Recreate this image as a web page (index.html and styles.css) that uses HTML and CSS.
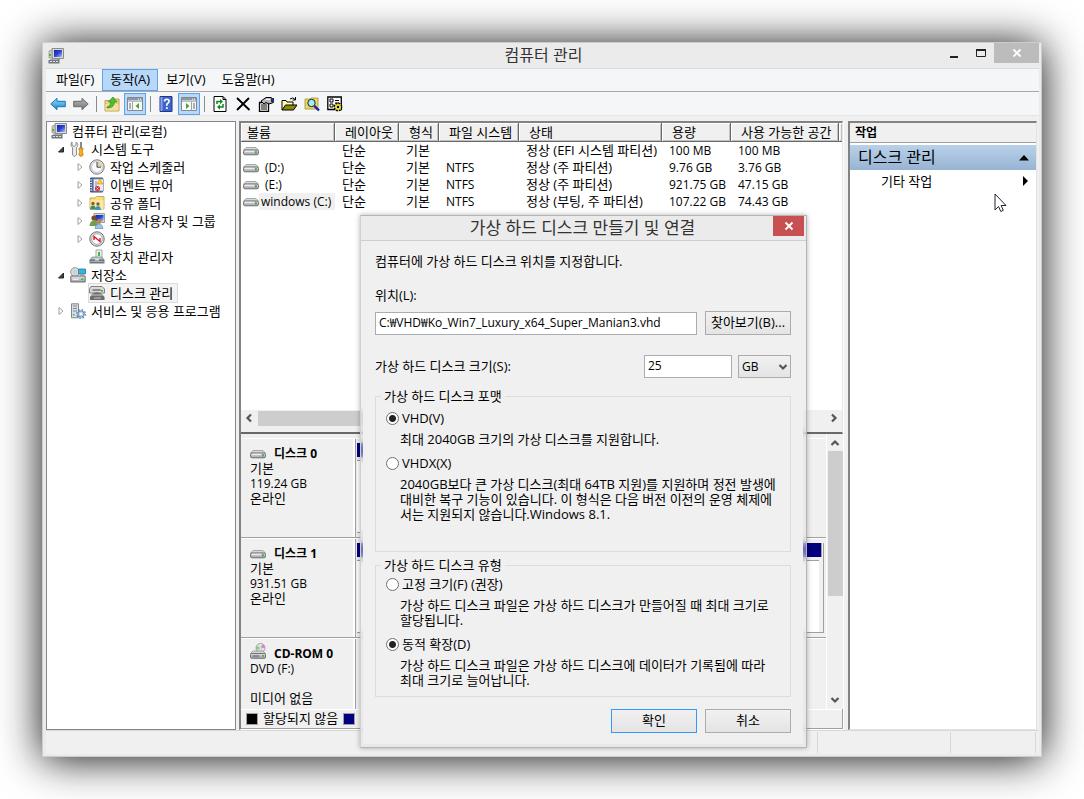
FILE: index.html
```html
<!DOCTYPE html>
<html lang="ko">
<head>
<meta charset="utf-8">
<title>컴퓨터 관리</title>
<link rel="stylesheet" href="styles.css">
</head>
<body>
<svg class="sprite" aria-hidden="true">
  <defs>
    <linearGradient id="g-blue" x1="0" y1="0" x2="1" y2="1"><stop offset="0" stop-color="#0a1fb4"/><stop offset=".5" stop-color="#2746d8"/><stop offset="1" stop-color="#a9c4f5"/></linearGradient>
    <linearGradient id="g-arrow" x1="0" y1="0" x2="0" y2="1"><stop offset="0" stop-color="#8fe0fb"/><stop offset="1" stop-color="#1587cf"/></linearGradient>
    <linearGradient id="g-gray" x1="0" y1="0" x2="0" y2="1"><stop offset="0" stop-color="#b5b5b5"/><stop offset="1" stop-color="#777"/></linearGradient>
    <linearGradient id="g-drive" x1="0" y1="0" x2="0" y2="1"><stop offset="0" stop-color="#e2e2e6"/><stop offset="1" stop-color="#a2a2aa"/></linearGradient>
  </defs>
  <symbol id="i-computer" viewBox="0 0 16 16">
    <path d="M4 .5h11.500v10H4z" fill="#dcd9cf" stroke="#8d8b84"/><path d="M6 2h8v7H6z" fill="url(#g-blue)"/>
    <path d="M1 3l3-1v8H1z" fill="#c9c9c2" stroke="#85857d" stroke-width=".6"/><path d="M1 6h2v2H1z" fill="#5fae3a"/>
    <path d="M8 10.500h4V12H8z" fill="#9b998f"/><path d="M.5 12h11v3.500H.5z" fill="#6f777d"/><path d="M2 11h7v1H2z" fill="#aab1b5"/><path d="M2 13h2v1H2zM5 13h2v1H5zM8 13h2v1H8z" fill="#dfe6ea"/>
  </symbol>
  <symbol id="i-tools" viewBox="0 0 16 16">
    <path d="M2 1v3l2 1.500L6 4V1c2 1 2.500 4 .5 5.500V14q-2.500 3-4 0V6.500C.5 5 .5 2 2 1z" fill="#e9e9e9" stroke="#777" stroke-width=".8"/>
    <path d="M10 1h2v7h-2z" fill="#8a8a8a"/><path d="M9 7h4v2l-.7 1 1 4q-2.300 3-4.600 0l1-4L9 9z" fill="#f4ad1c" stroke="#b06f07" stroke-width=".6"/>
  </symbol>
  <symbol id="i-clock" viewBox="0 0 16 16">
    <circle cx="8" cy="8" r="7.200" fill="#dfe5ea" stroke="#7b7b7b"/><circle cx="8" cy="8" r="5.400" fill="#f9fbfd" stroke="#b4bac0" stroke-width=".7"/>
    <path d="M8 8V2.800A5.200 5.200 0 0 1 13.200 8z" fill="#f3cf8c"/><path d="M8 3v5.200h4" fill="none" stroke="#2b4a77"/>
  </symbol>
  <symbol id="i-event" viewBox="0 0 16 16">
    <path d="M1.500 1h12v14h-12z" fill="#5570a8" stroke="#374c7d"/><path d="M4.500 2h10v12h-10z" fill="#e9ecf4" stroke="#8990a5" stroke-width=".7"/><path d="M6 5h2M6 7h2M6 9h2M6 11h2" stroke="#7f8fb6"/>
    <path d="M1 3h2M1 5.500h2M1 8h2M1 10.500h2M1 13h2" stroke="#dfe4f0"/><path d="M11 2l3 5H8z" fill="#ffcf21" stroke="#c29300" stroke-width=".5"/><circle cx="8.500" cy="11.500" r="2.500" fill="#d8222a"/><path d="M7.500 10.500l2 2m0-2l-2 2" stroke="#fff" stroke-width=".8"/>
  </symbol>
  <symbol id="i-share" viewBox="0 0 16 16">
    <path d="M1 3h5l1.500-1.500H15V14H1z" fill="#f7dc82" stroke="#c59a35" stroke-width=".8"/><path d="M1.500 5h13v9h-13z" fill="#fbe8a4"/>
    <circle cx="4" cy="8.500" r="1.700" fill="#8a5b34"/><path d="M1 14.500q.5-4 3-4t3 4z" fill="#3b8f5a"/><circle cx="9" cy="9" r="1.700" fill="#8a5b34"/><path d="M6 15q.5-4 3-4t3 4z" fill="#3c98b8"/>
  </symbol>
  <symbol id="i-users" viewBox="0 0 16 16">
    <path d="M5 .5h10.500v9H5z" fill="#d9d7ce" stroke="#8d8b84" stroke-width=".8"/><path d="M6.500 2h8v6h-8z" fill="url(#g-blue)"/>
    <circle cx="5" cy="5" r="2.600" fill="#7a4b27"/><path d="M.5 13q.5-5.500 4.500-5.500T9 13z" fill="#6fa04d"/>
    <circle cx="10" cy="8.500" r="2.400" fill="#b98551"/><path d="M6 15.500q.5-4.500 4-4.500t4 4.500z" fill="#9fc3e8" stroke="#5682b0" stroke-width=".6"/>
  </symbol>
  <symbol id="i-perf" viewBox="0 0 16 16">
    <circle cx="8" cy="8" r="7.200" fill="#e4e4e4" stroke="#707070"/><circle cx="8" cy="8" r="5.300" fill="#fff" stroke="#8b8b8b" stroke-width=".7"/>
    <path d="M5 9V5.500l6 5V7" fill="none" stroke="#d3202a" stroke-width="1.400"/>
  </symbol>
  <symbol id="i-device" viewBox="0 0 16 16">
    <path d="M7 1h6v8H7z" fill="#f0f2f2" stroke="#8b9494" stroke-width=".8"/><path d="M9 3h2v4H9z" fill="#51ad46"/>
    <path d="M3 8h10l2 3H1z" fill="#bcc4c6" stroke="#6d7678" stroke-width=".6"/><path d="M.5 10.500h15v4H.5z" fill="#6e7a80"/><path d="M6 9.500h4v2H6z" fill="#dbe0e2"/><path d="M1.500 12.500h13" stroke="#a5afb3"/>
  </symbol>
  <symbol id="i-storage" viewBox="0 0 16 16">
    <circle cx="5" cy="5" r="4.400" fill="#d8dcde" stroke="#82898c" stroke-width=".8"/><circle cx="5" cy="5" r="1.300" fill="#fff" stroke="#999" stroke-width=".6"/>
    <path d="M8.500 2h7v5h-7z" fill="#35b3dd" stroke="#277b9a" stroke-width=".8"/><path d="M10 8h4" stroke="#888"/>
    <path d="M.8 9h14.400v6H.8z" fill="url(#g-drive)" stroke="#60666a" stroke-width=".9"/><path d="M11 11.500h2.500V13H11z" fill="#2fcb31"/><path d="M2.500 12.200h6" stroke="#fff"/>
  </symbol>
  <symbol id="i-diskmgmt" viewBox="0 0 16 16">
    <path d="M2 1.500h11l2.500 2.500v4H.5V4z" fill="#d9d9d9" stroke="#6b6b6b" stroke-width=".8"/><path d="M4 4h7l2 2H3z" fill="#8c8c8c"/><path d="M12 5h2v1.500h-2z" fill="#40b83b"/>
    <path d="M3 9q4.500-3.500 10 0l2.500 3v3H1v-3z" fill="#6c6c6c"/><path d="M2 10h12M5 13h7" stroke="#c9c9c9"/>
  </symbol>
  <symbol id="i-services" viewBox="0 0 16 16">
    <path d="M1.500.8h7v14h-7z" fill="#d7dde0" stroke="#737d82" stroke-width=".9"/><path d="M3 3h4M3 5.500h4M3 8h4" stroke="#7f8a90"/><path d="M3 11h1.500v1.500H3z" fill="#43b13d"/>
    <circle cx="11" cy="11" r="3.200" fill="#b9d0e6" stroke="#5f87ad"/><circle cx="11" cy="11" r="4.300" fill="none" stroke="#5f87ad" stroke-width="1.300" stroke-dasharray="1.700 1.680"/><circle cx="11" cy="11" r="1.200" fill="#fff"/>
  </symbol>
  <symbol id="i-drive" viewBox="0 0 16 16">
    <path d="M3 4.500h10l2.500 2.700H.5z" fill="#d8d8dc" stroke="#8c8c8c" stroke-width=".7"/><rect x=".5" y="7" width="15" height="4.800" rx="1.600" fill="url(#g-drive)" stroke="#66666e" stroke-width=".9"/><path d="M2 8.300h9" stroke="#f4f4f6"/><path d="M12 8.200h1.800v2.300H12z" fill="#33b52a"/>
  </symbol>
  <symbol id="i-cd" viewBox="0 0 16 16">
    <circle cx="10.500" cy="5" r="4.500" fill="#e3e3e8" stroke="#888" stroke-width=".7"/><path d="M10.500 5L13 1.200A4.500 4.500 0 0 1 15 4.500z" fill="#d277e2"/><path d="M10.500 5L6.500 7A4.500 4.500 0 0 1 6.500 3z" fill="#76d277"/><circle cx="10.500" cy="5" r="1.200" fill="#fff" stroke="#999" stroke-width=".5"/>
    <path d="M3 8h10l2.500 2.500H.5z" fill="#d6d6da" stroke="#777" stroke-width=".6"/><rect x=".5" y="10.500" width="15" height="4.800" rx="1.200" fill="url(#g-drive)" stroke="#66666e" stroke-width=".9"/><path d="M2.500 13h7" stroke="#555"/><path d="M12 12h1.800v1.800H12z" fill="#33b52a"/>
  </symbol>
  <symbol id="i-back" viewBox="0 0 16 16"><path d="M.8 8L7 2.300v3h8.300v5.400H7v3z" fill="url(#g-arrow)" stroke="#1b72ae"/></symbol>
  <symbol id="i-fwd" viewBox="0 0 16 16"><path d="M15.200 8L9 2.300v3H.7v5.400H9v3z" fill="url(#g-gray)" stroke="#6a6a6a"/></symbol>
  <symbol id="i-up" viewBox="0 0 16 16">
    <path d="M1 4.500h5L7.500 3H15v12H1z" fill="#ecd08a" stroke="#b08d3c" stroke-width=".8"/><path d="M1.500 8h13v6.500h-13z" fill="#f5df9d"/><path d="M3 11q4-1 4-5H4.500L9 1l4 5h-2.700q0 6-7.300 6z" fill="#4cc22e" stroke="#2a8d17" stroke-width=".7"/>
  </symbol>
  <symbol id="i-panel" viewBox="0 0 16 16">
    <path d="M.5 1.500h15v13H.5z" fill="#f7f7f7" stroke="#7f8790"/><path d="M1 2h14v2.500H1z" fill="#8f979f"/><path d="M11 3.200h1M13 3.200h1" stroke="#fff"/><path d="M1 5.500h14" stroke="#b8bec4"/>
    <path d="M5.500 6v8.500M10.500 6v8.500" stroke="#9aa1a8"/><path d="M2 8h2M2 10h2M2 12h2" stroke="#5d6670"/>
  </symbol>
  <symbol id="i-tree" viewBox="0 0 16 16"><use href="#i-panel"/><path d="M6 6h9v8H6z" fill="#f9f9f9"/><path d="M12 7v6L8.500 10z" fill="#42ad22"/></symbol>
  <symbol id="i-actions" viewBox="0 0 16 16"><use href="#i-panel"/><path d="M1 6h9v8H1z" fill="#f9f9f9"/><path d="M5 7v6L8.500 10z" fill="#42ad22"/><path d="M12 8h2M12 10h2M12 12h2" stroke="#5d6670"/></symbol>
  <symbol id="i-help" viewBox="0 0 16 16"><path d="M2 .5h12v15H2z" fill="#3f63cc" stroke="#1d3686"/><path d="M2.500 1h2v14h-2z" fill="#8aa3e8"/><path d="M6.500 5.500q0-2.300 2.300-2.300t2.300 2q0 1.300-1.300 2T8.800 9.800" fill="none" stroke="#fff" stroke-width="1.600"/><path d="M8 11.200h1.800V13H8z" fill="#fff"/></symbol>
  <symbol id="i-refresh" viewBox="0 0 16 16"><path d="M2 .5h9l3 3v12H2z" fill="#fff" stroke="#000"/><path d="M11 .5v3h3" fill="none" stroke="#000"/><path d="M5 8V5.500h4M11 8v3H7" fill="none" stroke="#07891b" stroke-width="1.500"/><path d="M8 3l3 2.500L8 8zM8 8.500L5 11l3 2.700z" fill="#07891b"/></symbol>
  <symbol id="i-delete" viewBox="0 0 16 16"><path d="M2 2l12.500 12M14 2L2 14" stroke="#000" stroke-width="1.900"/></symbol>
  <symbol id="i-props" viewBox="0 0 16 16"><path d="M1.500 6.500h9v9h-9z" fill="#fff" stroke="#000" stroke-width="1.300"/><path d="M3 9h6M3 11h6M3 13h6" stroke="#000"/><path d="M3 5l5-3.500h5l2.500 2v3L11 8 8 6.500 6 8z" fill="#b8b8b8" stroke="#000"/><path d="M8 3.500h4" stroke="#fff"/><path d="M13 2h3v4h-3z" fill="#2a2a6c"/></symbol>
  <symbol id="i-open" viewBox="0 0 16 16"><path d="M1 14V4.500h4L6 6h6v3" fill="#ffffb0" stroke="#000"/><path d="M1 14l3.500-5H16l-3.500 5z" fill="#8d8a0a" stroke="#000"/><path d="M9 3q3-2.500 5 .5M14.500 1v3h-3" fill="none" stroke="#000"/></symbol>
  <symbol id="i-find" viewBox="0 0 16 16"><path d="M1 3h5l1-1h7v11H1z" fill="#e9d66c" stroke="#a89328" stroke-width=".8"/><circle cx="7.500" cy="7" r="3.700" fill="#9deef7" stroke="#222"/><path d="M10.300 9.800L15 14.500" stroke="#1327ad" stroke-width="2.400"/></symbol>
  <symbol id="i-settings" viewBox="0 0 16 16"><path d="M.8 1h13.500v12.500H.8z" fill="#fff" stroke="#000" stroke-width="1.300"/><path d="M3 3h3v3H3zM3 8h3v3H3z" fill="none" stroke="#000"/><path d="M8 4.500h4M8 7h4" stroke="#000" stroke-width="1.200"/><circle cx="11" cy="11" r="3.700" fill="#f3e443" stroke="#000" stroke-width="1.400" stroke-dasharray="1.900 1"/><circle cx="11" cy="11" r="1.200" fill="#000"/></symbol>
  <symbol id="i-chev" viewBox="0 0 10 10"><path d="M1.500 3L5 6.500 8.500 3" fill="none" stroke="#555" stroke-width="2.200"/></symbol>
  <symbol id="i-close" viewBox="0 0 10 10"><path d="M1.500 1.500l7 7M8.500 1.500l-7 7" fill="none" stroke="#fff" stroke-width="1.900"/></symbol>
</svg>

<main class="window">
  <header class="titlebar">
    <svg class="ico"><use href="#i-computer"/></svg>
    <h1 class="title">컴퓨터 관리</h1>
    <div class="caption">
      <button class="cap" aria-label="최소화"><svg class="capico" viewBox="0 0 12 12"><path d="M2 9h8v2H2z" fill="#222"/></svg></button>
      <button class="cap" aria-label="최대화"><svg class="capico" viewBox="0 0 12 12"><path d="M1.500 3v6.500h9V3" fill="none" stroke="#222"/><path d="M1 2h10v2H1z" fill="#222"/></svg></button>
      <button class="cap cap-close" aria-label="닫기"><svg class="x"><use href="#i-close"/></svg></button>
    </div>
  </header>

  <div class="body">
    <nav class="menu">
      <button>파일(F)</button><button class="on">동작(A)</button><button>보기(V)</button><button>도움말(H)</button>
    </nav>
    <div class="toolbar">
      <button aria-label="뒤로"><svg class="ico"><use href="#i-back"/></svg></button>
      <button aria-label="앞으로"><svg class="ico"><use href="#i-fwd"/></svg></button>
      <span class="sep"></span>
      <button aria-label="위로"><svg class="ico"><use href="#i-up"/></svg></button>
      <button class="on" aria-label="콘솔 트리"><svg class="ico"><use href="#i-tree"/></svg></button>
      <span class="sep"></span>
      <button aria-label="도움말"><svg class="ico"><use href="#i-help"/></svg></button>
      <button class="on" aria-label="작업 창"><svg class="ico"><use href="#i-actions"/></svg></button>
      <span class="sep"></span>
      <button aria-label="새로 고침"><svg class="ico"><use href="#i-refresh"/></svg></button>
      <button aria-label="삭제"><svg class="ico"><use href="#i-delete"/></svg></button>
      <button aria-label="속성"><svg class="ico"><use href="#i-props"/></svg></button>
      <button aria-label="열기"><svg class="ico"><use href="#i-open"/></svg></button>
      <button aria-label="찾기"><svg class="ico"><use href="#i-find"/></svg></button>
      <button aria-label="설정"><svg class="ico"><use href="#i-settings"/></svg></button>
    </div>

    <div class="panes">
      <ul class="tree">
        <li class="l0"><svg class="ico"><use href="#i-computer"/></svg><span>컴퓨터 관리(로컬)</span></li>
        <li class="l1"><svg class="tw open" viewBox="0 0 8 8"><path d="M6.500 2v5h-5z"/></svg><svg class="ico"><use href="#i-tools"/></svg><span>시스템 도구</span></li>
        <li class="l2"><svg class="tw" viewBox="0 0 8 8"><path d="M2 .5v7L6 4z"/></svg><svg class="ico"><use href="#i-clock"/></svg><span>작업 스케줄러</span></li>
        <li class="l2"><svg class="tw" viewBox="0 0 8 8"><path d="M2 .5v7L6 4z"/></svg><svg class="ico"><use href="#i-event"/></svg><span>이벤트 뷰어</span></li>
        <li class="l2"><svg class="tw" viewBox="0 0 8 8"><path d="M2 .5v7L6 4z"/></svg><svg class="ico"><use href="#i-share"/></svg><span>공유 폴더</span></li>
        <li class="l2"><svg class="tw" viewBox="0 0 8 8"><path d="M2 .5v7L6 4z"/></svg><svg class="ico"><use href="#i-users"/></svg><span>로컬 사용자 및 그룹</span></li>
        <li class="l2"><svg class="tw" viewBox="0 0 8 8"><path d="M2 .5v7L6 4z"/></svg><svg class="ico"><use href="#i-perf"/></svg><span>성능</span></li>
        <li class="l2"><svg class="tw" viewBox="0 0 8 8"></svg><svg class="ico"><use href="#i-device"/></svg><span>장치 관리자</span></li>
        <li class="l1"><svg class="tw open" viewBox="0 0 8 8"><path d="M6.500 2v5h-5z"/></svg><svg class="ico"><use href="#i-storage"/></svg><span>저장소</span></li>
        <li class="l2"><svg class="tw" viewBox="0 0 8 8"></svg><div class="sel"><svg class="ico"><use href="#i-diskmgmt"/></svg><span>디스크 관리</span></div></li>
        <li class="l1"><svg class="tw" viewBox="0 0 8 8"><path d="M2 .5v7L6 4z"/></svg><svg class="ico"><use href="#i-services"/></svg><span>서비스 및 응용 프로그램</span></li>
      </ul>

      <section class="center">
        <div class="volumes">
          <table>
            <colgroup><col class="c1"><col class="c2"><col class="c3"><col class="c4"><col class="c5"><col class="c6"><col class="c7"><col></colgroup>
            <thead><tr><th>볼륨</th><th>레이아웃</th><th>형식</th><th>파일 시스템</th><th>상태</th><th>용량</th><th>사용 가능한 공간</th><th></th></tr></thead>
            <tbody>
              <tr><td class="vol"><svg class="ico"><use href="#i-drive"/></svg></td><td>단순</td><td>기본</td><td></td><td>정상 (EFI 시스템 파티션)</td><td class="lat">100 MB</td><td class="lat">100 MB</td><td></td></tr>
              <tr><td class="vol"><svg class="ico"><use href="#i-drive"/></svg><span class="drv">(D:)</span></td><td>단순</td><td>기본</td><td class="lat">NTFS</td><td>정상 (주 파티션)</td><td class="lat">9.76 GB</td><td class="lat">3.76 GB</td><td></td></tr>
              <tr><td class="vol"><svg class="ico"><use href="#i-drive"/></svg><span class="drv">(E:)</span></td><td>단순</td><td>기본</td><td class="lat">NTFS</td><td>정상 (주 파티션)</td><td class="lat">921.75 GB</td><td class="lat">47.15 GB</td><td></td></tr>
              <tr><td class="vol"><svg class="ico"><use href="#i-drive"/></svg><span class="name">windows (C:)</span></td><td>단순</td><td>기본</td><td class="lat">NTFS</td><td>정상 (부팅, 주 파티션)</td><td class="lat">107.22 GB</td><td class="lat">74.43 GB</td><td></td></tr>
            </tbody>
          </table>
          <div class="space"></div>
          <div class="hscroll"><svg class="chev left"><use href="#i-chev"/></svg><span class="hthumb"></span><svg class="chev right"><use href="#i-chev"/></svg></div>
        </div>
        <div class="disks">
          <div class="diskrows">
            <div class="rows">
              <div class="disk">
                <div class="info"><h2><svg class="ico"><use href="#i-drive"/></svg>디스크 0</h2><p>기본</p><p class="lat">119.24 GB</p><p>온라인</p></div>
                <div class="map short"><div class="bar"></div><div class="part"></div></div>
              </div>
              <div class="disk">
                <div class="info"><h2><svg class="ico"><use href="#i-drive"/></svg>디스크 1</h2><p>기본</p><p class="lat">931.51 GB</p><p>온라인</p></div>
                <div class="map"><div class="bar"></div><div class="part"></div></div>
              </div>
              <div class="disk last">
                <div class="info"><h2><svg class="ico cd"><use href="#i-cd"/></svg>CD-ROM 0</h2><p class="lat">DVD (F:)</p><p>&nbsp;</p><p>미디어 없음</p></div>
              </div>
            </div>
            <div class="vscroll"><svg class="chev up"><use href="#i-chev"/></svg><span class="vthumb"></span><svg class="chev"><use href="#i-chev"/></svg></div>
          </div>
          <div class="legend"><span class="sw black"></span>할당되지 않음<span class="sw navy"></span></div>
        </div>
      </section>

      <aside class="actions">
        <h2 class="ah">작업</h2>
        <button class="agroup"><span>디스크 관리</span><svg class="tri" viewBox="0 0 10 10"><path d="M0 7.500h10L5 2z"/></svg></button>
        <button class="aitem"><span>기타 작업</span><svg class="tri" viewBox="0 0 10 10"><path d="M3 0v10l5-5z"/></svg></button>
      </aside>
    </div>
    <footer class="status"><span></span><span></span><span></span></footer>
  </div>

  <svg class="cursor" viewBox="0 0 13 20"><path d="M1 1v16l3.500-3.500 2.300 5 2.500-1.200-2.200-4.800H12z" fill="#fff" stroke="#223" stroke-width="1"/></svg>

  <form class="dialog" onsubmit="return false">
    <div class="dtitle"><h2>가상 하드 디스크 만들기 및 연결</h2><button type="button" class="dclose" aria-label="닫기"><svg class="x"><use href="#i-close"/></svg></button></div>
    <div class="client">
      <p>컴퓨터에 가상 하드 디스크 위치를 지정합니다.</p>
      <label class="loc" for="path">위치(L):</label>
      <div class="row"><input id="path" class="grow" type="text" value="C:₩VHD₩Ko_Win7_Luxury_x64_Super_Manian3.vhd"><button type="button" class="btn">찾아보기(B)...</button></div>
      <div class="row size"><label class="grow" for="size">가상 하드 디스크 크기(S):</label><input id="size" type="text" value="25"><div class="selwrap"><select aria-label="단위"><option>GB</option><option>MB</option><option>TB</option></select><svg class="chev"><use href="#i-chev"/></svg></div></div>
      <fieldset class="f1">
        <legend>가상 하드 디스크 포맷</legend>
        <label class="radio"><input type="radio" name="format" checked>VHD(V)</label>
        <p class="desc">최대 2040GB 크기의 가상 디스크를 지원합니다.</p>
        <label class="radio"><input type="radio" name="format">VHDX(X)</label>
        <p class="desc">2040GB보다 큰 가상 디스크(최대 64TB 지원)를 지원하며 정전 발생에<br>대비한 복구 기능이 있습니다. 이 형식은 다음 버전 이전의 운영 체제에<br>서는 지원되지 않습니다.Windows 8.1.</p>
      </fieldset>
      <fieldset class="f2">
        <legend>가상 하드 디스크 유형</legend>
        <label class="radio"><input type="radio" name="kind">고정 크기(F) (권장)</label>
        <p class="desc">가상 하드 디스크 파일은 가상 하드 디스크가 만들어질 때 최대 크기로<br>할당됩니다.</p>
        <label class="radio"><input type="radio" name="kind" checked>동적 확장(D)</label>
        <p class="desc">가상 하드 디스크 파일은 가상 하드 디스크에 데이터가 기록됨에 따라<br>최대 크기로 늘어납니다.</p>
      </fieldset>
      <div class="row end"><button class="btn primary">확인</button><button type="button" class="btn">취소</button></div>
    </div>
  </form>
</main>
</body>
</html>
```

FILE: styles.css
```css
* { box-sizing: border-box; }
body, h1, h2, p, ul, fieldset { margin: 0; padding: 0; }
body {
  padding: 42px;
  background: #fff;
  color: #000;
  font: 13px/15px "Open Sans", "Noto Sans CJK KR", sans-serif;
  overflow: hidden;
}
button, input, select { font: inherit; color: inherit; margin: 0; border-radius: 0; }
button { padding: 0; border: 0; background: none; white-space: nowrap; }
h1, h2 { font-size: inherit; }
.sprite { position: absolute; width: 0; height: 0; }
.ico { width: 16px; height: 16px; flex: none; }
.x { width: 10px; height: 10px; }
.chev { width: 10px; height: 10px; flex: none; }
.chev.left { transform: rotate(90deg); }
.chev.right { transform: rotate(-90deg); }
.chev.up { transform: rotate(180deg); }
.lat { font-size: 12px; }

.window {
  position: relative;
  display: flex;
  flex-direction: column;
  height: calc(100vh - 84px);
  min-height: 715px;
  padding: 0 2px 2px 3px;
  border: 1px solid #cdcdcd;
  background: #ebebeb;
  box-shadow: 0 2px 40px rgba(0, 0, 0, .95);
}
.titlebar { display: grid; grid-template-columns: 1fr auto 1fr; height: 25px; padding-left: 2px; align-items: center; }
.title { font-size: 16px; line-height: 22px; padding-bottom: 2px; font-weight: 400; color: #333; }
.caption { display: flex; justify-content: flex-end; align-self: start; }
.cap { display: flex; width: 27px; height: 20px; align-items: center; justify-content: center; }
.capico { width: 12px; height: 12px; }
.cap-close { width: 45px; background: #bcbcbc; }

.body { flex: 1; display: flex; flex-direction: column; border-top: 1px solid #dadbdc; background: #f0f0f0; min-height: 0; }
.menu { display: flex; height: 23px; padding-left: 2px; background: #f5f6f7; border-bottom: 1px solid #a9a9a9; }
.menu button { padding: 0 7px 2px; border: 1px solid transparent; }
.menu .on, .toolbar .on { background: #b8d8f9; border: 1px solid #62a2e4; }
.toolbar { display: flex; gap: 1px; height: 24px; padding: 1px 0 0 1px; background: #f5f6f7; border-bottom: 1px solid #e6e6e6; }
.toolbar button { display: flex; width: 22px; align-items: center; justify-content: center; }
.sep { width: 1px; margin: 3px; background: #8c8c8c; }

.panes { flex: 1; display: grid; grid-template-columns: 190px minmax(0, 1fr) 190px; column-gap: 3px; padding: 5px 2px 0 0; min-height: 0; }
.tree { list-style: none; background: #fff; border: 1px solid #828790; white-space: nowrap; }
.tree li { display: flex; align-items: center; height: 18px; gap: 5px; }
.l0 { padding-left: 4px; }
.l1 { padding-left: 10px; }
.l2 { padding-left: 29px; }
.tw { width: 8px; height: 8px; flex: none; fill: #fff; stroke: #a0a0a0; }
.tw.open { fill: #404040; stroke: #262626; }
.sel { display: flex; gap: 5px; align-items: center; height: 18px; padding-right: 4px; background: #f3f3f3; outline: 1px solid #dcdcdc; }

.center { display: flex; flex-direction: column; min-width: 0; border-left: 2px solid #828282; border-right: 1px solid #fff; border-bottom: 1px solid #fff; }
.volumes { flex: 1; display: flex; flex-direction: column; background: #fff; border-top: 2px solid #828282; border-bottom: 2px solid #696969; border-right: 1px solid #e3e3e3; min-height: 0; }
table { width: 100%; table-layout: fixed; border-collapse: separate; border-spacing: 0; white-space: nowrap; }
.c1 { width: 94px; }
.c2 { width: 64px; }
.c3 { width: 40px; }
.c4 { width: 80px; }
.c5 { width: 143px; }
.c6 { width: 69px; }
.c7 { width: 108px; }
th { height: 19px; padding: 0 0 0 10px; text-align: left; font-weight: 400; background: #f0f0f0; border: 1px solid #696969; border-width: 0 1px 1px 0; box-shadow: inset 1px 1px #fff, inset -1px -1px #c0c0c0; }
th:first-child { padding-left: 6px; }
th:last-child { border-right: 0; }
td { height: 17px; padding: 0 0 0 7px; line-height: 17px; }
.vol { display: flex; align-items: center; padding-left: 2px; font-size: 12px; }
.drv { padding-left: 6px; }
.name { background: #f0f0f0; padding: 0 4px 0 2px; }
.space { flex: 1; }
.hscroll { display: flex; align-items: center; height: 16px; margin-bottom: 6px; background: #f0f0f0; padding: 0 3px; gap: 4px; box-shadow: 0 6px #f0f0f0; }
.hthumb { width: 78%; height: 15px; background: #cdcdcd; }
.hscroll .right { margin-left: auto; }

.diskrows { display: flex; }
.rows { flex: 1; min-width: 0; padding-top: 4px; border-right: 1px solid #fff; }
.disk { display: flex; min-height: 99px; border-top: 1px solid #fff; border-bottom: 1px solid #a0a0a0; }
.disk.last { min-height: 71px; border-bottom: 0; }
.info { width: 115px; padding: 7px 0 0 9px; border-right: 1px solid #a0a0a0; white-space: nowrap; box-shadow: inset -2px 0 #fff; }
.info h2 { display: flex; gap: 8px; height: 15px; align-items: center; font-size: 12px; font-weight: 700; }
.cd { align-self: flex-end; margin-bottom: 2px; }
.map { flex: 1; margin: 4px 2px 4px 1px; padding-right: 1px; border-right: 1px solid #a0a0a0; border-bottom: 1px solid #a0a0a0; }
.short { margin-right: 40px; }
.bar { height: 14px; background: #000080; border-right: 1px solid #a0a0a0; }
.part { height: 72px; margin: 3px 3px 0 0; background: #fff; border-top: 1px solid #a0a0a0; }
.vscroll { display: flex; flex-direction: column; align-items: center; width: 16px; padding: 4px 0; background: #f0f0f0; gap: 3px; }
.vthumb { width: 15px; height: 145px; background: #cdcdcd; }
.vscroll .chev:last-child { margin-top: auto; }
.legend { display: flex; align-items: center; gap: 5px; height: 20px; padding-left: 5px; border: 1px solid #a0a0a0; border-width: 0 1px 1px 0; box-shadow: inset 0 1px #fff; }
.sw { width: 12px; height: 12px; border: 1px solid #a0a0a0; }
.black { background: #000; }
.navy { background: #000080; }

.actions { margin-left: 1px; background: #fff; border: 1px solid #e3e3e3; border-top: 2px solid #828282; border-left: 2px solid #828282; }
.ah { height: 20px; padding: 1px 5px; line-height: 17px; font-size: 12px; font-weight: 700; background: #f0f0f0; border-bottom: 1px solid #a0a0a0; }
.agroup, .aitem { display: flex; width: 100%; align-items: center; justify-content: space-between; text-align: left; }
.agroup { height: 25px; margin-top: 2px; padding: 0 7px 0 8px; font-size: 16px; background: linear-gradient(#b9d1ea, #98b4d3); }
.aitem { height: 22px; padding: 0 6px 0 31px; }
.tri { width: 10px; height: 10px; }
.status { display: flex; justify-content: flex-end; height: 24px; padding: 1px 3px; border-top: 1px solid #d7d7d7; }
.status span { width: 133px; border-left: 1px solid #d7d7d7; }
.status span:nth-child(2) { width: 85px; }
.status span:last-child { width: 1px; }
.cursor { position: absolute; left: 951px; top: 150px; width: 13px; height: 20px; }

.dialog {
  position: absolute;
  left: 317px;
  top: 172px;
  width: 447px;
  padding: 0 3px 3px 2px;
  border: 1px solid #b4b4b4;
  border-left-color: #d0d0d0;
  background: rgba(225, 225, 225, .5);
  backdrop-filter: blur(3px);
  box-shadow: 0 0 5px rgba(0, 0, 0, .3);
}
.dtitle { display: grid; grid-template-columns: 31px 1fr 31px; height: 25px; margin: 0 -3px 0 -2px; padding-right: 2px; background: #ebebeb; border-bottom: 1px solid #cfcfcf; }
.dtitle h2 { grid-column: 2; text-align: center; font-size: 17px; line-height: 24px; font-weight: 400; color: #333; white-space: nowrap; }
.dclose { height: 20px; background: #c75050; }
.client { padding: 13px 12px 11px 12px; background: #f0f0f0; white-space: nowrap; }
.loc { display: block; margin: 19px 0 8px; }
.row { display: flex; align-items: center; gap: 8px; min-height: 24px; }
.grow { flex: 1; min-width: 0; }
.client input[type="text"] { height: 23px; padding: 0 3px 2px; border: 1px solid #abadb3; background: #fff; font-size: 12px; outline: 0; }
.btn { width: 86px; height: 24px; padding-bottom: 2px; border: 1px solid #acacac; background: linear-gradient(#f1f1f1, #e4e4e4); }
.primary { border-color: #3399ff; }
.size { gap: 6px; margin-top: 19px; }
#size { width: 88px; }
.selwrap { position: relative; width: 53px; height: 23px; }
.selwrap select { width: 100%; height: 23px; padding: 0 3px; appearance: none; border: 1px solid #acacac; background: linear-gradient(#f1f1f1, #e4e4e4); font-size: 12px; }
.selwrap .chev { position: absolute; right: 3px; top: 7px; pointer-events: none; }
fieldset { border: 1px solid #dcdcdc; min-width: 0; }
legend { margin-left: 5px; padding: 0 3px; }
.f1 { margin-top: 11px; padding: 6px 0 29px; }
.f2 { margin-top: 6px; padding: 3px 0 8px; }
.radio { display: flex; align-items: center; gap: 3px; height: 16px; margin-left: 10px; }
.radio input { width: 13px; height: 13px; appearance: none; border: 1px solid #707070; border-radius: 50%; background: #fff; }
.radio input:checked { background: radial-gradient(circle, #222 3px, #fff 4px); }
.desc { margin: 6px 0 8px 24px; }
.desc:last-child { margin-bottom: 0; }
.end { justify-content: flex-end; margin-top: 12px; }
```
